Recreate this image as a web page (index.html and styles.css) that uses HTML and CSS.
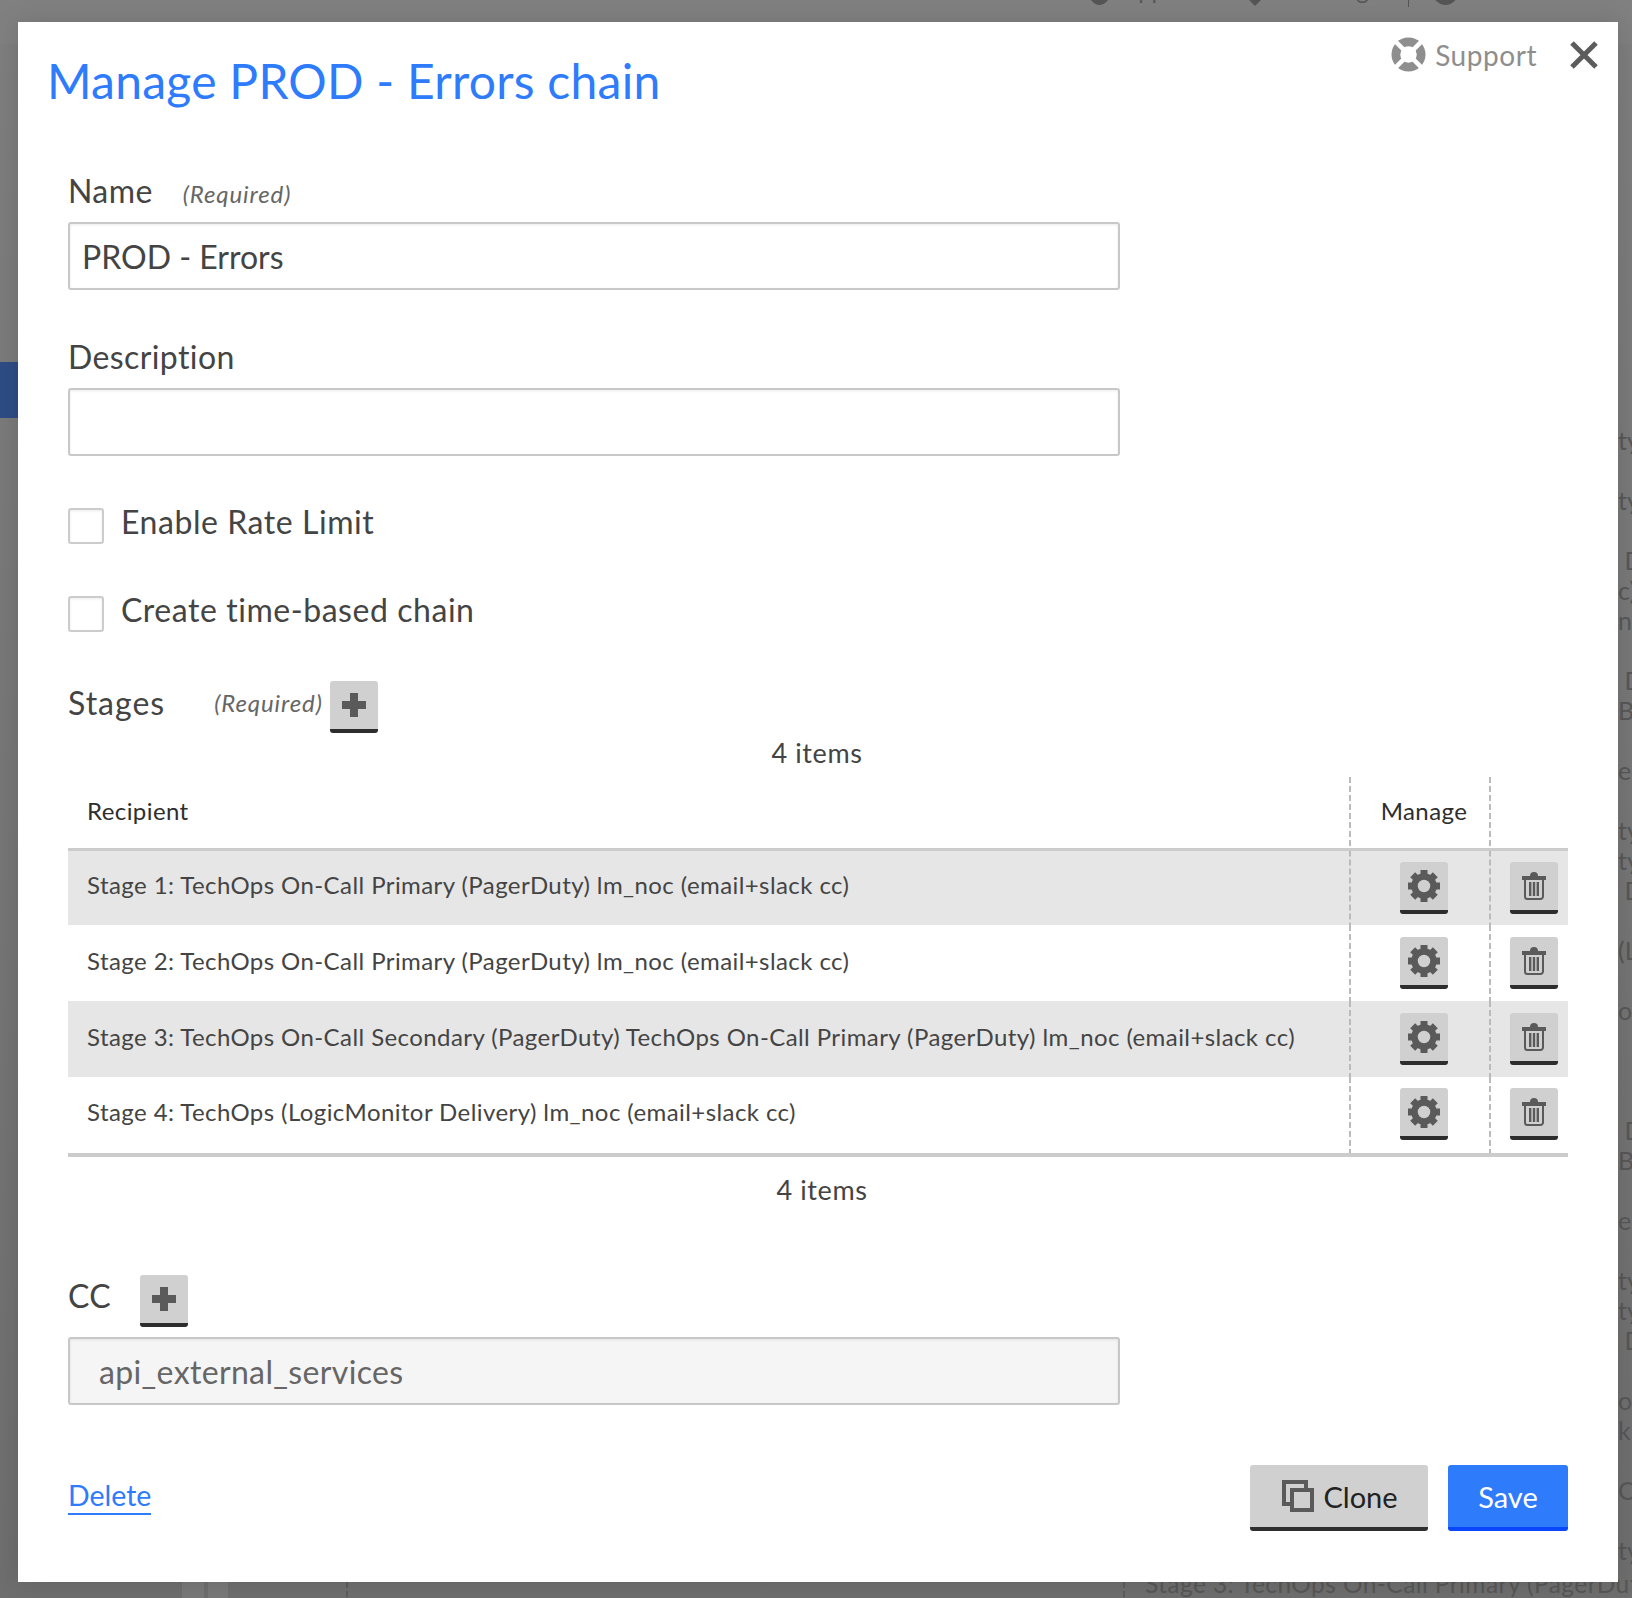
FILE: index.html
```html
<!DOCTYPE html>
<html lang="en">
<head>
    <meta charset="UTF-8">
    <title>Manage PROD - Errors chain</title>
    <link rel="stylesheet" href="styles.css">
</head>
<body>
    <svg class="icon-defs" width="0" height="0">
        <symbol id="gear" viewBox="0 0 32 32">
            <g stroke="#5a5a5a" stroke-width="7" stroke-dasharray="7 18 7" fill="none">
                <path d="M16 0v32"/>
                <path d="M16 0v32" transform="rotate(45 16 16)"/>
                <path d="M16 0v32" transform="rotate(90 16 16)"/>
                <path d="M16 0v32" transform="rotate(135 16 16)"/>
            </g>
            <circle cx="16" cy="16" r="9.5" fill="none" stroke="#5a5a5a" stroke-width="6.5"/>
        </symbol>
        <symbol id="trash" viewBox="0 0 24 28">
            <path d="M8 4a4 4 0 0 1 8 0z" fill="#5a5a5a"/>
            <rect x="0" y="4" width="24" height="4" fill="#5a5a5a"/>
            <path d="M3 8v16.5a2.5 2.5 0 0 0 2.5 2.5h13a2.5 2.5 0 0 0 2.5-2.5V8" fill="none" stroke="#5a5a5a" stroke-width="2"/>
            <path d="M7 10h2.4v14H7zM10.8 10h2.4v14h-2.4zM14.6 10H17v14h-2.4z" fill="#5a5a5a"/>
        </symbol>
        <symbol id="plus" viewBox="0 0 24 24">
            <path d="M8 0h8v8h8v8h-8v8H8v-8H0V8h8z" fill="#5a5a5a"/>
        </symbol>
    </svg>

    <div class="backdrop">
        <div class="bg-top">
            <span class="bg-dot bg-dot-user"></span><span class="bg-top-text bg-support">Support</span>
            <span class="bg-shield"></span><span class="bg-top-text bg-manage">Manage</span>
            <span class="bg-sep"></span>
            <span class="bg-dot bg-dot-globe"></span>
        </div>
        <div class="bg-nav-active"></div>
        <div class="bg-lines">ty

ty

 D
c)
n

 D
B

ed

ty
ty
 D

(L

ot



 D
B

ed

ty
ty
 D

ot
k

C

ty</div>
        <div class="bg-cell bg-cell-a"></div>
        <div class="bg-cell bg-cell-b"></div>
        <div class="bg-dash bg-dash-a"></div>
        <div class="bg-dash bg-dash-b"></div>
        <div class="bg-bottom">Stage 3: TechOps On-Call Primary (PagerDuty)</div>
    </div>

    <div class="modal">
        <div class="modal-tools">
            <span class="support">
                <svg class="support-icon" viewBox="0 0 36 36">
                    <circle cx="18" cy="18" r="17.5" fill="#8e8e8e"/>
                    <circle cx="18" cy="18" r="8.5" fill="#fff"/>
                    <path d="M5 5l26 26M31 5L5 31" stroke="#fff" stroke-width="4.5"/>
                </svg>
                Support
            </span>
            <svg class="close-icon" viewBox="0 0 28 28">
                <path d="M2 2l24 24M26 2L2 26" stroke="#5c5c5c" stroke-width="5"/>
            </svg>
        </div>
        <h1>Manage PROD - Errors chain</h1>

        <div class="form">
            <div class="label-row">
                <label>Name</label><span class="required">(Required)</span>
            </div>
            <input class="text-input" type="text" value="PROD - Errors">

            <div class="label-row label-row-desc">
                <label>Description</label>
            </div>
            <input class="text-input" type="text">

            <div class="check-row check-first">
                <span class="checkbox"></span>Enable Rate Limit
            </div>
            <div class="check-row check-second">
                <span class="checkbox"></span>Create time-based chain
            </div>

            <div class="stages-row">
                <label>Stages</label><span class="required">(Required)</span>
                <button class="btn-icon"><svg class="plus-icon"><use href="#plus"/></svg></button>
            </div>
            <div class="count count-top">4 items</div>

            <table class="stage-table">
                <thead>
                    <tr>
                        <th class="col-name">Recipient</th>
                        <th class="col-manage">Manage</th>
                        <th class="col-remove"></th>
                    </tr>
                </thead>
                <tbody>
                    <tr class="odd">
                        <td class="col-name">Stage 1: TechOps On-Call Primary (PagerDuty) lm_noc (email+slack cc)</td>
                        <td class="col-manage"><button class="btn-icon"><svg class="gear-icon"><use href="#gear"/></svg></button></td>
                        <td class="col-remove"><button class="btn-icon"><svg class="trash-icon"><use href="#trash"/></svg></button></td>
                    </tr>
                    <tr>
                        <td class="col-name">Stage 2: TechOps On-Call Primary (PagerDuty) lm_noc (email+slack cc)</td>
                        <td class="col-manage"><button class="btn-icon"><svg class="gear-icon"><use href="#gear"/></svg></button></td>
                        <td class="col-remove"><button class="btn-icon"><svg class="trash-icon"><use href="#trash"/></svg></button></td>
                    </tr>
                    <tr class="odd">
                        <td class="col-name">Stage 3: TechOps On-Call Secondary (PagerDuty) TechOps On-Call Primary (PagerDuty) lm_noc (email+slack cc)</td>
                        <td class="col-manage"><button class="btn-icon"><svg class="gear-icon"><use href="#gear"/></svg></button></td>
                        <td class="col-remove"><button class="btn-icon"><svg class="trash-icon"><use href="#trash"/></svg></button></td>
                    </tr>
                    <tr class="last">
                        <td class="col-name">Stage 4: TechOps (LogicMonitor Delivery) lm_noc (email+slack cc)</td>
                        <td class="col-manage"><button class="btn-icon"><svg class="gear-icon"><use href="#gear"/></svg></button></td>
                        <td class="col-remove"><button class="btn-icon"><svg class="trash-icon"><use href="#trash"/></svg></button></td>
                    </tr>
                </tbody>
            </table>
            <div class="count count-bottom">4 items</div>

            <div class="cc-row">
                <label>CC</label>
                <button class="btn-icon"><svg class="plus-icon"><use href="#plus"/></svg></button>
            </div>
            <input class="text-input text-input-locked" type="text" value="api_external_services">

            <div class="actions">
                <a class="delete-link" href="#">Delete</a>
                <div class="action-buttons">
                    <button class="btn btn-clone">
                        <svg class="clone-icon" viewBox="0 0 32 32">
                            <path d="M2 2h22v22H2z" fill="none" stroke="#5a5a5a" stroke-width="4"/>
                            <path d="M10 10h20v20H10z" fill="#d0d0d0" stroke="#5a5a5a" stroke-width="4"/>
                        </svg>
                        Clone
                    </button>
                    <button class="btn btn-save">Save</button>
                </div>
            </div>
        </div>
    </div>
</body>
</html>
```

FILE: styles.css
```css
* {
    box-sizing: border-box;
}

html, body {
    margin: 0;
    height: 100%;
}

body {
    width: 1632px;
    height: 1598px;
    position: relative;
    overflow: hidden;
    background: linear-gradient(#7e7e7e, #6e6e6e);
    font-family: "Lato", "Open Sans", sans-serif;
    color: #444;
}

.icon-defs {
    position: absolute;
}

/* dimmed page behind the dialog */
.backdrop {
    position: absolute;
    inset: 0;
    color: #575757;
}

.bg-top {
    height: 44px;
    background: #808080;
    position: relative;
    overflow: hidden;
}

.bg-dot {
    position: absolute;
    top: -20px;
    height: 25px;
    border-radius: 50%;
    background: #555;
}

.bg-dot-user {
    left: 1089px;
    width: 21px;
}

.bg-dot-globe {
    left: 1433px;
    width: 25px;
}

.bg-shield {
    position: absolute;
    left: 1244px;
    top: -5px;
    width: 22px;
    height: 11px;
    background: #555;
    clip-path: polygon(0 0, 100% 0, 50% 100%);
}

.bg-top-text {
    position: absolute;
    top: -25px;
    font-size: 24px;
    line-height: 30px;
}

.bg-support { left: 1112px; }
.bg-manage { left: 1297px; }

.bg-sep {
    position: absolute;
    left: 1408px;
    top: 0;
    width: 1px;
    height: 7px;
    background: #555;
}

.bg-nav-active {
    position: absolute;
    left: 0;
    top: 362px;
    width: 18px;
    height: 56px;
    background: #2e4c85;
}

.bg-lines {
    position: absolute;
    left: 1618px;
    top: 425px;
    width: 14px;
    overflow: hidden;
    white-space: pre;
    font-size: 25px;
    line-height: 30px;
}

.bg-cell {
    position: absolute;
    top: 1582px;
    height: 16px;
    background: #797979;
}

.bg-cell-a {
    left: 182px;
    width: 22px;
}

.bg-cell-b {
    left: 208px;
    width: 20px;
}

.bg-dash {
    position: absolute;
    top: 1582px;
    width: 2px;
    height: 16px;
    background-image: linear-gradient(#5c5c5c 6px, transparent 6px);
    background-size: 2px 9px;
}

.bg-dash-a { left: 346px; }
.bg-dash-b { left: 1123px; }

.bg-bottom {
    position: absolute;
    left: 1145px;
    top: 1569px;
    white-space: nowrap;
    font-size: 24.5px;
    letter-spacing: 0.42px;
    line-height: 30px;
}

/* dialog */
.modal {
    position: absolute;
    left: 18px;
    top: 22px;
    width: 1600px;
    height: 1560px;
    background: #fff;
    box-shadow: 0 0 24px rgba(0, 0, 0, 0.12);
}

.modal-tools {
    position: absolute;
    top: 15px;
    right: 20px;
    display: flex;
    align-items: center;
}

.support {
    display: flex;
    align-items: center;
    gap: 9px;
    font-size: 28px;
    letter-spacing: 0.55px;
    line-height: 34px;
    color: #8e8e8e;
}

.support-icon {
    width: 35px;
    height: 35px;
}

.close-icon {
    width: 28px;
    height: 28px;
    margin-left: 33px;
}

h1 {
    margin: 0;
    padding: 31px 0 0 29px;
    height: 146px;
    font-size: 48px;
    line-height: 56px;
    font-weight: 400;
    letter-spacing: 0.25px;
    color: #2e7bfb;
}

.form {
    padding: 0 50px;
}

label {
    font-weight: 400;
    letter-spacing: 0.4px;
}

.label-row {
    height: 54px;
    font-size: 32px;
    line-height: 46px;
}

.label-row-desc {
    margin-top: 44px;
}

.required {
    margin-left: 30px;
    font-size: 24px;
    font-style: italic;
    letter-spacing: 0.9px;
    color: #666;
}

.text-input {
    display: block;
    width: 1052px;
    height: 68px;
    padding: 0 12px;
    border: 2px solid #c8c8c8;
    border-radius: 3px;
    box-shadow: inset 0 1px 3px rgba(0, 0, 0, 0.08);
    background: #fff;
    font-family: inherit;
    font-size: 32px;
    color: #444;
}

.text-input-locked {
    padding-left: 29px;
    background: #f5f5f5;
    letter-spacing: 0.35px;
    color: #666;
}

.check-row {
    display: flex;
    align-items: flex-start;
    height: 36px;
    font-size: 32px;
    line-height: 28px;
    letter-spacing: 0.55px;
    color: #444;
}

.check-first { margin-top: 52px; }
.check-second { margin-top: 52px; }

.checkbox {
    width: 36px;
    height: 36px;
    margin-right: 17px;
    border: 2px solid #ccc;
    border-radius: 3px;
    box-shadow: inset 0 1px 3px rgba(0, 0, 0, 0.08);
}

.stages-row {
    display: flex;
    align-items: flex-start;
    height: 52px;
    margin-top: 49px;
    font-size: 32px;
    line-height: 44px;
}

.stages-row label {
    letter-spacing: 1px;
}

.stages-row .required {
    margin-left: 49px;
    margin-right: 7px;
    line-height: 44px;
}

.btn-icon {
    display: inline-flex;
    align-items: center;
    justify-content: center;
    width: 48px;
    height: 52px;
    padding: 0;
    border: 0;
    border-bottom: 4px solid #2d2d2d;
    border-radius: 3px;
    background: #d0d0d0;
    vertical-align: middle;
}

.plus-icon {
    width: 24px;
    height: 24px;
}

.gear-icon {
    width: 32px;
    height: 32px;
}

.trash-icon {
    width: 24px;
    height: 28px;
}

.count {
    font-size: 27px;
    letter-spacing: 0.6px;
    line-height: 43px;
    text-align: center;
    color: #444;
}

.count-top {
    height: 44px;
    width: 1498px;
    line-height: 39px;
}

.count-bottom {
    margin-top: 11px;
    width: 1508px;
}

/* stage table */
.stage-table {
    width: 1500px;
    border-collapse: collapse;
    table-layout: fixed;
    font-size: 24px;
    letter-spacing: 0.42px;
    color: #444;
}

.stage-table th {
    height: 72px;
    padding: 0 0 4px;
    border-bottom: 3px solid #ccc;
    font-weight: 400;
    text-align: left;
    color: #2e2e2e;
}

.stage-table td {
    height: 76px;
    padding: 0;
}

.stage-table .last td {
    height: 78px;
}

.stage-table tbody {
    border-bottom: 4px solid #ccc;
}

.stage-table .odd {
    background: #e6e6e6;
}

.stage-table .col-name {
    width: 1281px;
    padding-left: 19px;
}

.stage-table td.col-name {
    padding-bottom: 6px;
}

.stage-table .last td.col-name {
    padding-bottom: 8px;
}

.stage-table .col-manage,
.stage-table .col-remove {
    padding-left: 10px;
    text-align: center;
    background-image: linear-gradient(#bbb 6px, transparent 6px);
    background-size: 2px 9px;
    background-repeat: repeat-y;
    background-position: 0 0;
}

.stage-table .col-manage {
    width: 140px;
}

.stage-table .col-remove {
    width: 79px;
}

.stage-table .last .col-manage,
.stage-table .last .col-remove {
    padding-bottom: 2px;
}

.cc-row {
    display: flex;
    align-items: flex-start;
    height: 52px;
    margin-top: 64px;
    margin-bottom: 10px;
    font-size: 32px;
    line-height: 42px;
}

.cc-row label {
    width: 72px;
}

.actions {
    display: flex;
    align-items: flex-start;
    justify-content: space-between;
    width: 1500px;
    margin-top: 60px;
}

.delete-link {
    margin-top: 13px;
    font-size: 28.5px;
    line-height: 35px;
    color: #2e7bfb;
    text-decoration: none;
    border-bottom: 2px solid #2e7bfb;
}

.action-buttons {
    display: flex;
    gap: 20px;
}

.btn {
    display: inline-flex;
    align-items: center;
    justify-content: center;
    height: 66px;
    padding: 0;
    border: 0;
    border-radius: 3px;
    font-family: inherit;
    font-size: 29px;
}

.btn-clone {
    width: 178px;
    gap: 9px;
    padding-left: 2px;
    background: #d0d0d0;
    border-bottom: 4px solid #2f2f2f;
    color: #222;
}

.clone-icon {
    width: 32px;
    height: 32px;
}

.btn-save {
    width: 120px;
    background: #2e7bfb;
    border-bottom: 4px solid #0a46fb;
    color: #fff;
}
```
